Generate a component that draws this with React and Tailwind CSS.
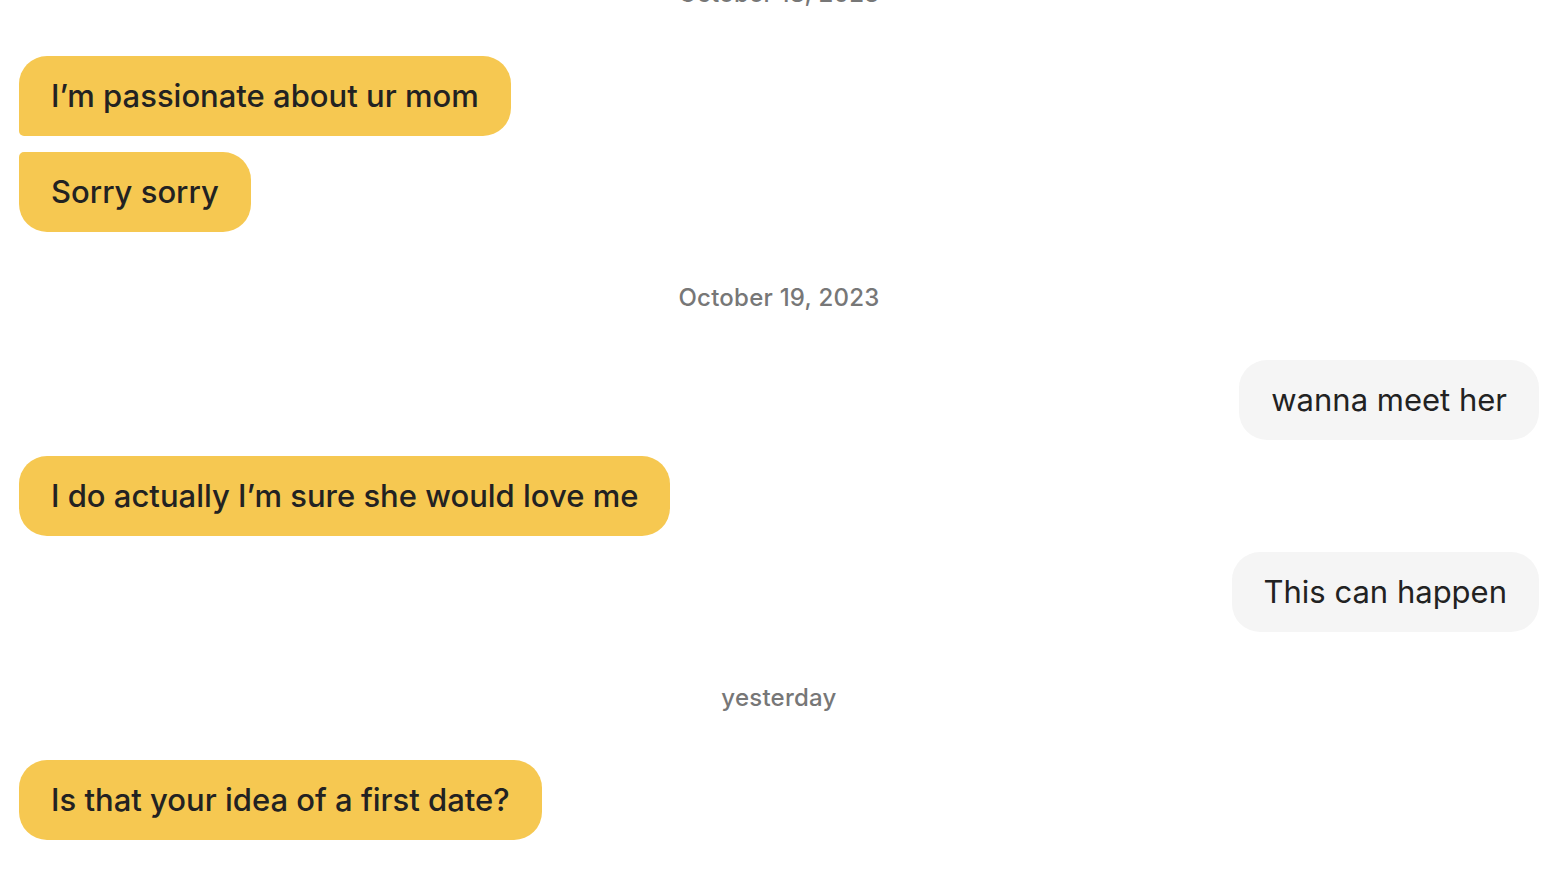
const messages = [
  { type: "date", text: "October 18, 2023" },
  { type: "in", text: "I\u2019m passionate about ur mom", shape: "rounded-[28px] rounded-bl-[5px]" },
  { type: "in", text: "Sorry sorry", shape: "rounded-[28px] rounded-tl-[5px]" },
  { type: "date", text: "October 19, 2023" },
  { type: "out", text: "wanna meet her", shape: "rounded-[28px]" },
  { type: "in", text: "I do actually I\u2019m sure she would love me", shape: "rounded-[28px]" },
  { type: "out", text: "This can happen", shape: "rounded-[28px]" },
  { type: "date", text: "yesterday" },
  { type: "in", text: "Is that your idea of a first date?", shape: "rounded-[28px]" },
];

const DateLabel = ({ text }) => (
  <div className="my-12 h-8 pt-[4px] flex items-center justify-center text-[24px] font-medium tracking-[0.01em] text-[#777777]">
    {text}
  </div>
);

const Bubble = ({ msg }) => {
  const isOut = msg.type === "out";
  return (
    <div className={isOut ? "flex justify-end" : "flex justify-start"}>
      <div
        className={`h-20 flex items-center px-8 text-[31px] text-[#222222] whitespace-nowrap ${msg.shape} ${
          isOut ? "bg-[#f5f5f5] font-normal" : "bg-[#f6c851] font-medium"
        }`}
      >
        {msg.text}
      </div>
    </div>
  );
};

export default function App() {
  return (
    <div
      className="w-full min-h-screen bg-white overflow-hidden"
      style={{ fontFamily: "Inter, 'Noto Sans', sans-serif" }}
    >
      <div className="-mt-[72px] pl-[19px] pr-[23px] flex flex-col">
        {messages.map((m, i) => {
          if (m.type === "date") return <DateLabel key={i} text={m.text} />;
          const prev = messages[i - 1];
          const gap = prev && prev.type !== "date" ? "mt-4" : "";
          return (
            <div key={i} className={gap}>
              <Bubble msg={m} />
            </div>
          );
        })}
      </div>
    </div>
  );
}
